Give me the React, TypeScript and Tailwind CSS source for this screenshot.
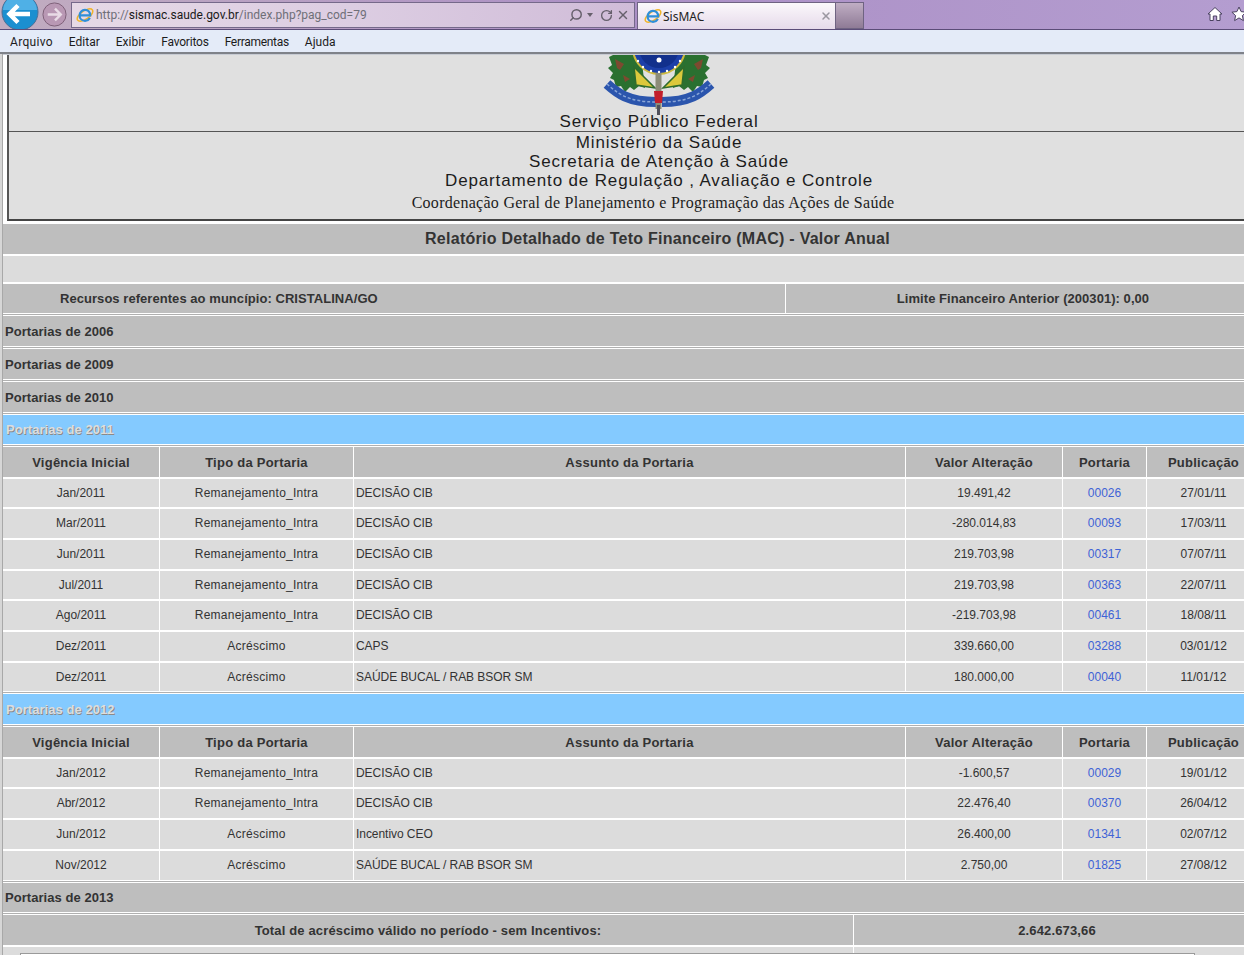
import { RotateCw, Search, X } from "lucide-react";

const rows2011 = [
  { h: "h-[28px]", vig: "Jan/2011", tipo: "Remanejamento_Intra", assunto: "DECISÃO CIB", valor: "19.491,42", port: "00026", pub: "27/01/11" },
  { h: "h-[29px] [&>div]:pb-px", vig: "Mar/2011", tipo: "Remanejamento_Intra", assunto: "DECISÃO CIB", valor: "-280.014,83", port: "00093", pub: "17/03/11" },
  { h: "h-[29px] [&>div]:pb-px", vig: "Jun/2011", tipo: "Remanejamento_Intra", assunto: "DECISÃO CIB", valor: "219.703,98", port: "00317", pub: "07/07/11" },
  { h: "h-[28px]", vig: "Jul/2011", tipo: "Remanejamento_Intra", assunto: "DECISÃO CIB", valor: "219.703,98", port: "00363", pub: "22/07/11" },
  { h: "h-[29px] [&>div]:pb-px", vig: "Ago/2011", tipo: "Remanejamento_Intra", assunto: "DECISÃO CIB", valor: "-219.703,98", port: "00461", pub: "18/08/11" },
  { h: "h-[29px] [&>div]:pb-px", vig: "Dez/2011", tipo: "Acréscimo", assunto: "CAPS", valor: "339.660,00", port: "03288", pub: "03/01/12" },
  { h: "h-[28px]", vig: "Dez/2011", tipo: "Acréscimo", assunto: "SAÚDE BUCAL / RAB BSOR SM", valor: "180.000,00", port: "00040", pub: "11/01/12" },
];

const rows2012 = [
  { h: "h-[28px]", vig: "Jan/2012", tipo: "Remanejamento_Intra", assunto: "DECISÃO CIB", valor: "-1.600,57", port: "00029", pub: "19/01/12" },
  { h: "h-[29px] [&>div]:pb-px", vig: "Abr/2012", tipo: "Remanejamento_Intra", assunto: "DECISÃO CIB", valor: "22.476,40", port: "00370", pub: "26/04/12" },
  { h: "h-[29px] [&>div]:pb-px", vig: "Jun/2012", tipo: "Acréscimo", assunto: "Incentivo CEO", valor: "26.400,00", port: "01341", pub: "02/07/12" },
  { h: "h-[29px] [&>div]:pb-px", vig: "Nov/2012", tipo: "Acréscimo", assunto: "SAÚDE BUCAL / RAB BSOR SM", valor: "2.750,00", port: "01825", pub: "27/08/12" },
];

const gridCols = "grid grid-cols-[156px_193px_551px_156px_83px_113px] gap-x-px";

function IeIcon() {
  return (
    <svg viewBox="0 0 18 18" className="w-[18px] h-[18px] shrink-0">
      <ellipse cx="9" cy="9" rx="9" ry="4.200" transform="rotate(-35 9 9)" fill="none" stroke="#f0b429" strokeWidth="1.500" />
      <path d="M3.600 9.400h10.600c0-3.400-2.300-5.600-5.200-5.600C6 3.800 3.600 6.200 3.600 9.400c0 3.200 2.400 5.400 5.400 5.400 2.200 0 3.900-1 4.800-2.900" fill="none" stroke="#2f8fd8" strokeWidth="2.200" />
    </svg>
  );
}

function Emblem() {
  return (
    <svg viewBox="0 0 116 60" className="w-[116px] h-[60px] blur-[0.6px]">
      <path d="M8 2l6-3 26 0 4 34-6-2-5 4-4-3-5 5-4-6-5 1-2-7-4-2 3-5-5-5 4-3z" fill="#2a7030" />
      <path d="M108 2l-6-3-26 0-4 34 6-2 5 4 4-3 5 5 4-6 5 1 2-7 4-2-3-5 5-5-4-3z" fill="#2a7030" />
      <path d="M14 4l9 5-4 6-3-2zM102 4l-9 5 4 6 3-2zM22 20l7 4-5 3zM94 20l-7 4 5 3z" fill="#7d4a30" />
      <path d="M33 12l21 21-19-3zM83 12L62 33l19-3z" fill="#dcc83c" stroke="#2f6b2c" strokeWidth="1.500" />
      <circle cx="58" cy="-7" r="26" fill="#1c3fa8" stroke="#cdb93e" strokeWidth="2" />
      <circle cx="58" cy="-7" r="20" fill="#12308c" />
      <g fill="#ffffff">
        <circle cx="37" cy="6" r="1.200" />
        <circle cx="42" cy="12" r="1.200" />
        <circle cx="50" cy="16" r="1.200" />
        <circle cx="58" cy="17" r="1.200" />
        <circle cx="66" cy="16" r="1.200" />
        <circle cx="74" cy="12" r="1.200" />
        <circle cx="79" cy="6" r="1.200" />
        <circle cx="58" cy="5" r="2.500" />
      </g>
      <path d="M6 29c10 9 21 18 49 18M110 29c-10 9-21 18-49 18" fill="none" stroke="#2b55ad" strokeWidth="10" />
      <path d="M6 29c10 9 21 18 49 18M110 29c-10 9-21 18-49 18" fill="none" stroke="#8aa6d8" strokeWidth="1.500" strokeDasharray="3 2" />
      <rect x="54.500" y="18" width="6" height="36" fill="#8c8c78" />
      <path d="M53 36h9l-1 12h-7z" fill="#c21f2c" />
      <rect x="56" y="50" width="3" height="10" fill="#50505a" />
    </svg>
  );
}

function BrowserChrome() {
  return (
    <div>
      <div className="h-[30px] flex items-start border-b border-[#5b4c78] bg-linear-to-r from-[#c2adc0] via-[#ab8fc5] to-[#b49dd0] overflow-hidden">
        <svg viewBox="0 0 40 30" className="w-[40px] h-[30px] shrink-0">
          <circle cx="20" cy="12" r="18" fill="#1b8fd0" stroke="#4a6f96" strokeWidth="1" />
          <path d="M20 -6a18 17 0 0 1 17 16H3a18 17 0 0 1 17-16z" fill="#4fb0e6" />
          <path d="M10 14h20M18 5.500l-8.500 8.500 8.500 8.500" fill="none" stroke="#ffffff" strokeWidth="4.500" />
        </svg>
        <svg viewBox="0 0 28 28" className="w-[27px] h-[27px] ml-[1px] mt-px shrink-0">
          <circle cx="14" cy="14" r="12" fill="#b998b4" stroke="#7d6078" strokeWidth="1" />
          <path d="M7 14h13M14.500 8l6 6-6 6" fill="none" stroke="#e9dbe6" strokeWidth="2.500" />
        </svg>
        <div className="ml-[3px] mt-[2px] w-[564px] h-[26px] flex items-center pl-[4px] border border-[#75698a] bg-linear-to-r from-[#e6d9e6] via-[#dccde2] to-[#d0bcd8] shrink-0">
          <IeIcon />
          <span className="ml-[2px] text-[12px] text-[#6f6f78] font-['Roboto',sans-serif] whitespace-nowrap">
            http://<span className="text-[#1a1a1a]">sismac.saude.gov.br</span>/index.php?pag_cod=79
          </span>
          <div className="ml-auto flex items-center text-[#66606c]">
            <Search className="w-[14px] h-[14px] -scale-x-100" strokeWidth={2.500} />
            <span className="ml-[4px] w-0 h-0 border-x-[3px] border-x-transparent border-t-[4px] border-t-[#66606c]" />
            <RotateCw className="ml-[7px] w-[13px] h-[13px]" strokeWidth={2.500} />
            <X className="ml-[3px] mr-[4px] w-[14px] h-[14px]" strokeWidth={2.500} />
          </div>
        </div>
        <div className="ml-[2px] mt-[2px] w-[199px] h-[27px] flex items-center pl-[6px] pr-[3px] border-x border-t border-[#6f6382] bg-linear-to-b from-[#fbf8fb] to-[#e6daea] shrink-0">
          <IeIcon />
          <span className="ml-[1px] mt-px text-[12px] text-[#222222] font-['Noto_Sans',sans-serif]">SisMAC</span>
          <X className="ml-auto w-[12px] h-[12px] text-[#9a97a0]" strokeWidth={3} />
        </div>
        <div className="w-[28px] h-[27px] mt-[2px] border-y border-r border-[#6f6382] bg-linear-to-b from-[#c0aec4] to-[#8f7b96] shrink-0" />
        <svg viewBox="0 0 16 16" className="ml-auto mt-[6px] w-[16px] h-[16px] shrink-0">
          <path d="M8 1.500L15 8h-2v6.500H9.700V10H6.300v4.500H3V8H1z" fill="#ffffff" stroke="#4a4260" strokeWidth="1" />
        </svg>
        <svg viewBox="0 0 16 16" className="ml-[8px] -mr-[3px] mt-[6px] w-[16px] h-[16px] shrink-0">
          <path d="M8 1l2.100 4.600 5 .6-3.700 3.400 1 5L8 11.900l-4.400 2.700 1-5L.9 6.200l5-.6z" fill="#ffffff" stroke="#4a4260" strokeWidth="1" />
        </svg>
      </div>
      <div className="h-[22px] pl-[10px] pt-px flex items-center gap-x-[16px] bg-[#e4ebf8] text-[12px] text-[#1c1c1c] font-['Roboto',sans-serif]">
        <span className="tracking-[0.3px]">Arquivo</span>
        <span>Editar</span>
        <span>Exibir</span>
        <span className="tracking-[-0.2px]">Favoritos</span>
        <span className="tracking-[-0.3px]">Ferramentas</span>
        <span>Ajuda</span>
      </div>
      <div className="h-[2px] bg-[#7f8289]" />
    </div>
  );
}

function Banner() {
  return (
    <div className="ml-[4px] w-[1302px] h-[166px] bg-[#e0e0e0] border-l-2 border-l-[#555555] border-b-2 border-b-[#444444] text-center text-[#1c1c1c] leading-none">
      <div className="h-[77px] border-b border-[#555555] flex flex-col items-center overflow-hidden">
        <Emblem />
        <div className="text-[17px] tracking-[0.85px] -mt-[2px]">Serviço Público Federal</div>
      </div>
      <div className="text-[17px] tracking-[0.85px] mt-[2px]">Ministério da Saúde</div>
      <div className="text-[17px] tracking-[0.85px] mt-[2px]">Secretaria de Atenção à Saúde</div>
      <div className="text-[17px] tracking-[0.85px] mt-[2px]">Departamento de Regulação , Avaliação e Controle</div>
      <div className="text-[16px] tracking-[0.28px] mt-[6px] pr-[12px] font-['Liberation_Serif',serif]">Coordenação Geral de Planejamento e Programação das Ações de Saúde</div>
    </div>
  );
}

function Divider() {
  return <div className="h-[3px] bg-white py-px"><div className="h-px bg-[#b0b0b0]" /></div>;
}

function YearRow({ label, h = "h-[30px]" }: { label: string; h?: string }) {
  return <div className={`${h} bg-[#bebebe] flex items-center pl-[2px] pt-px text-[13px] tracking-[0.05px] font-bold text-[#333333]`}>{label}</div>;
}

function BlueRow({ label, h }: { label: string; h: string }) {
  return (
    <div className={`${h} bg-[#84caff] flex items-center pl-[3px] pt-px text-[13px] tracking-[0.05px] font-bold text-[#dddddd] [text-shadow:1px_1px_0_#8a8a8a]`}>
      {label}
    </div>
  );
}

function PortariaTable({ rows }: { rows: typeof rows2011 }) {
  return (
    <div className="flex flex-col gap-y-[2px]">
      <div className={`${gridCols} h-[30px] text-[13px] font-bold text-[#333333] text-center`}>
        {["Vigência Inicial", "Tipo da Portaria", "Assunto da Portaria", "Valor Alteração", "Portaria", "Publicação"].map((t) => (
          <div key={t} className="bg-[#bebebe] flex items-center justify-center pt-px tracking-[0.25px]">{t}</div>
        ))}
      </div>
      {rows.map((r) => (
        <div key={r.port} className={`${gridCols} ${r.h} text-[12px] text-[#333333] text-center`}>
          <div className="bg-[#dcdcdc] flex items-center justify-center">{r.vig}</div>
          <div className="bg-[#dcdcdc] flex items-center justify-center tracking-[0.25px]">{r.tipo}</div>
          <div className="bg-[#dcdcdc] flex items-center pl-[2px] tracking-[-0.05px]">{r.assunto}</div>
          <div className="bg-[#dcdcdc] flex items-center justify-center">{r.valor}</div>
          <div className="bg-[#dcdcdc] flex items-center justify-center text-[#3f63d6]">{r.port}</div>
          <div className="bg-[#dcdcdc] flex items-center justify-center">{r.pub}</div>
        </div>
      ))}
    </div>
  );
}

export default function App() {
  return (
    <div className="w-[1244px] h-[955px] overflow-hidden bg-white font-['Liberation_Sans',Arial,sans-serif]">
      <BrowserChrome />
      <div className="w-[1312px] border-l-2 border-[#d6d6d6]">
        <div className="border-l border-[#a8a8a8] bg-white">
          <div className="h-px bg-[#c8ccd4]" />
          <Banner />
          <div className="h-[3px]" />
          <div className="h-[30px] bg-[#bebebe] flex items-center justify-center text-[16px] tracking-[0.26px] font-bold text-[#333333]">
            Relatório Detalhado de Teto Financeiro (MAC) - Valor Anual
          </div>
          <div className="h-[2px]" />
          <div className="h-[26px] bg-[#dcdcdc]" />
          <div className="h-[2px]" />
          <div className="h-[29px] grid grid-cols-[782px_474px] gap-x-px text-[13px] tracking-[0.05px] font-bold text-[#333333]">
            <div className="bg-[#bebebe] flex items-center pl-[57px]">Recursos referentes ao muncípio: CRISTALINA/GO</div>
            <div className="bg-[#bebebe] flex items-center justify-center">Limite Financeiro Anterior (200301): 0,00</div>
          </div>
          <Divider />
          <YearRow label="Portarias de 2006" />
          <Divider />
          <YearRow label="Portarias de 2009" />
          <Divider />
          <YearRow label="Portarias de 2010" />
          <Divider />
          <BlueRow label="Portarias de 2011" h="h-[29px]" />
          <Divider />
          <PortariaTable rows={rows2011} />
          <Divider />
          <BlueRow label="Portarias de 2012" h="h-[30px]" />
          <Divider />
          <PortariaTable rows={rows2012} />
          <Divider />
          <YearRow label="Portarias de 2013" h="h-[29px]" />
          <Divider />
          <div className="h-[30px] grid grid-cols-[850px_406px] gap-x-px text-[13px] tracking-[0.15px] font-bold text-[#333333]">
            <div className="bg-[#bebebe] flex items-center justify-center pt-px">Total de acréscimo válido no período - sem Incentivos:</div>
            <div className="bg-[#bebebe] flex items-center justify-center pt-px">2.642.673,66</div>
          </div>
          <div className="h-[2px]" />
          <div className="h-[6px] grid grid-cols-[850px_406px] gap-x-px">
            <div className="bg-[#dcdcdc]" />
            <div className="bg-[#dcdcdc]" />
          </div>
          <div className="h-[14px] bg-[#dcdcdc] pl-[17px]">
            <div className="w-[1175px] h-[14px] bg-white border border-[#9a9a9a]" />
          </div>
        </div>
      </div>
    </div>
  );
}
